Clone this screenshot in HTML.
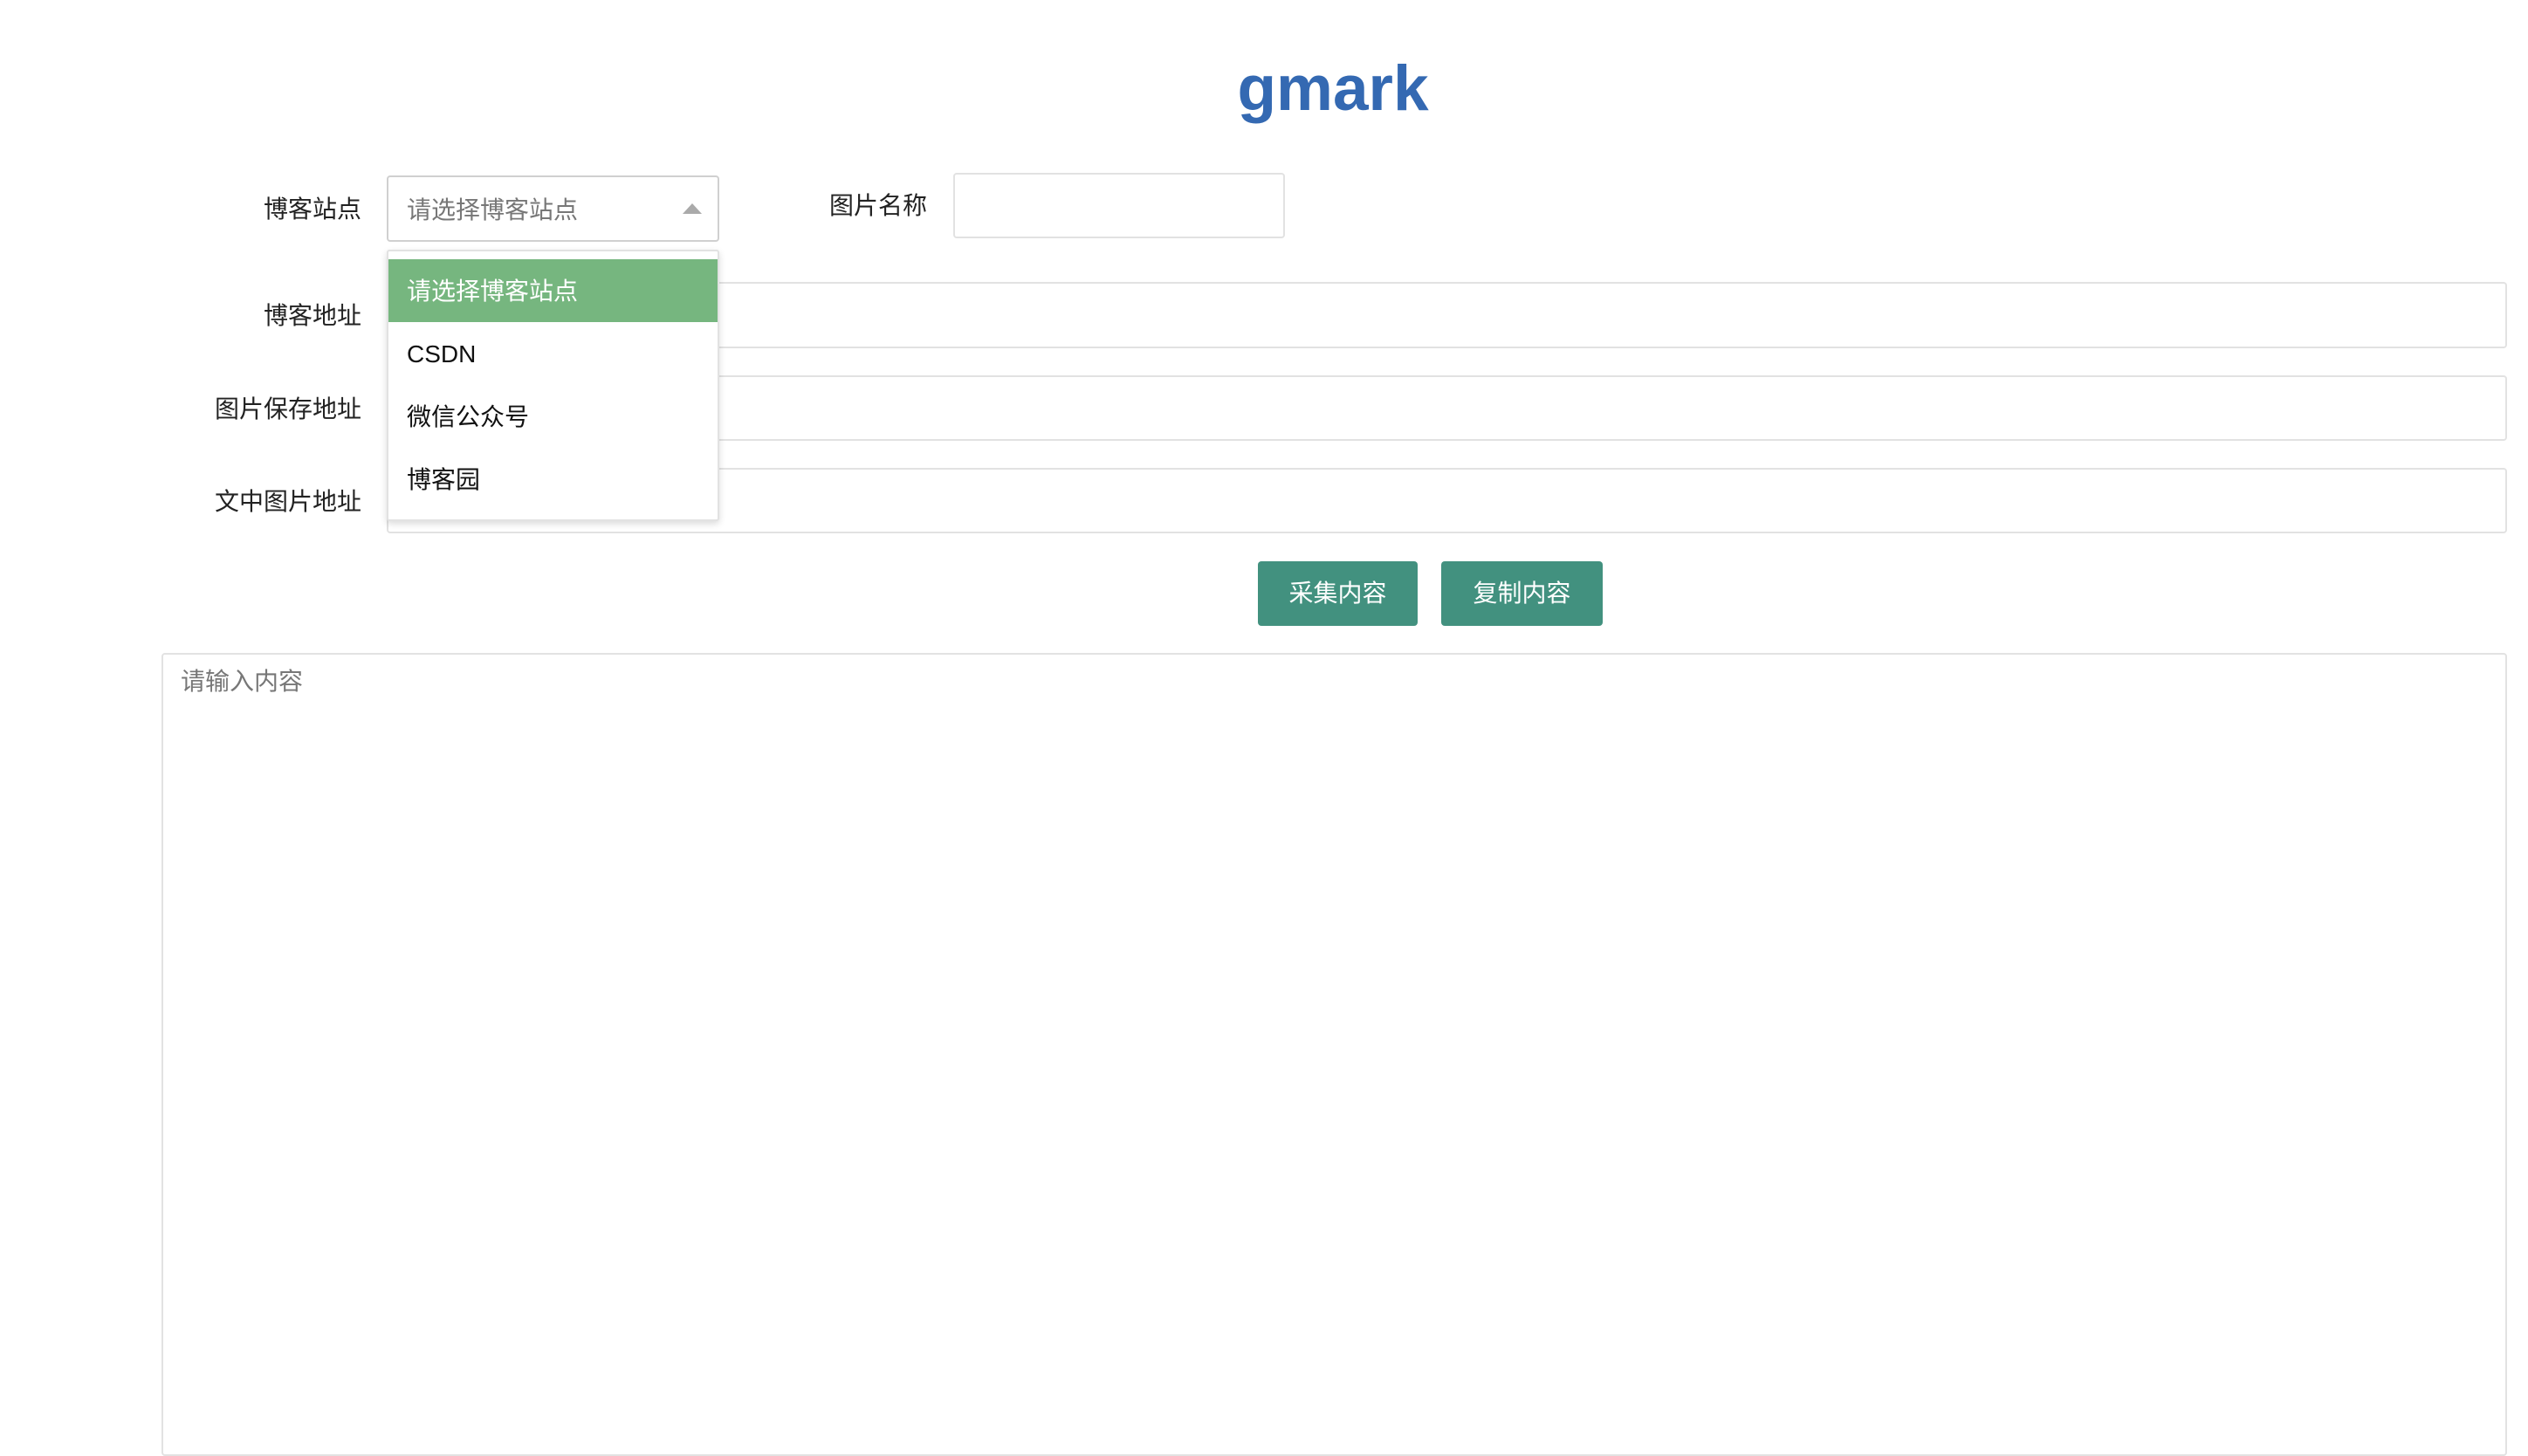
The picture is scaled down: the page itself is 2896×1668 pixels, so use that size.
<!DOCTYPE html>
<html><head><meta charset="utf-8"><style>
body{margin:0;width:2896px;height:1622px;background:#fff;font-family:"Liberation Sans","Noto Sans CJK SC",sans-serif;position:relative;overflow:hidden}
.a{position:absolute}
.title{left:0;width:3054px;text-align:center;top:57px;font-size:73px;font-weight:bold;color:#3469b2;line-height:90px}
.lbl{font-size:28px;color:#222;line-height:40px;text-align:right;width:300px}
.inp{border:2px solid #e2e2e2;border-radius:4px;box-sizing:border-box;background:#fff}
.btn{background:#42917f;color:#fff;font-size:28px;border-radius:4px;text-align:center;line-height:74px;top:643px;height:74px}
.dd{left:443px;top:286px;width:381px;height:311px;border:2px solid #e2e2e2;box-sizing:border-box;background:#fff;box-shadow:0 3px 8px rgba(0,0,0,.15);border-radius:3px}
.it{position:absolute;left:0;right:0;height:72px;line-height:74px;padding-left:21px;font-size:28px;color:#111}
</style></head><body>
<div class="a title">gmark</div>

<div class="a lbl" style="left:114px;top:220px">博客站点</div>
<div class="a inp" style="left:443px;top:201px;width:381px;height:76px;border-color:#d0d0d0"></div>
<div class="a" style="left:466px;top:221px;font-size:28px;color:#777;line-height:40px">请选择博客站点</div>
<div class="a" style="left:782px;top:233px;width:0;height:0;border-left:11px solid transparent;border-right:11px solid transparent;border-bottom:12px solid #aaa"></div>

<div class="a lbl" style="left:762px;top:216px">图片名称</div>
<div class="a inp" style="left:1092px;top:198px;width:380px;height:75px"></div>

<div class="a lbl" style="left:114px;top:342px">博客地址</div>
<div class="a inp" style="left:443px;top:323px;width:2429px;height:76px"></div>
<div class="a lbl" style="left:114px;top:449px">图片保存地址</div>
<div class="a inp" style="left:443px;top:430px;width:2429px;height:75px"></div>
<div class="a lbl" style="left:114px;top:555px">文中图片地址</div>
<div class="a inp" style="left:443px;top:536px;width:2429px;height:75px"></div>

<div class="a dd">
<div class="it" style="top:9px;background:#76b67f;color:#fff">请选择博客站点</div>
<div class="it" style="top:81px">CSDN</div>
<div class="it" style="top:153px">微信公众号</div>
<div class="it" style="top:225px">博客园</div>
</div>

<div class="a btn" style="left:1441px;width:183px">采集内容</div>
<div class="a btn" style="left:1651px;width:185px">复制内容</div>

<div class="a inp" style="left:185px;top:748px;width:2687px;height:920px"></div>
<div class="a" style="left:207px;top:761px;font-size:28px;color:#777;line-height:40px">请输入内容</div>
</body></html>
